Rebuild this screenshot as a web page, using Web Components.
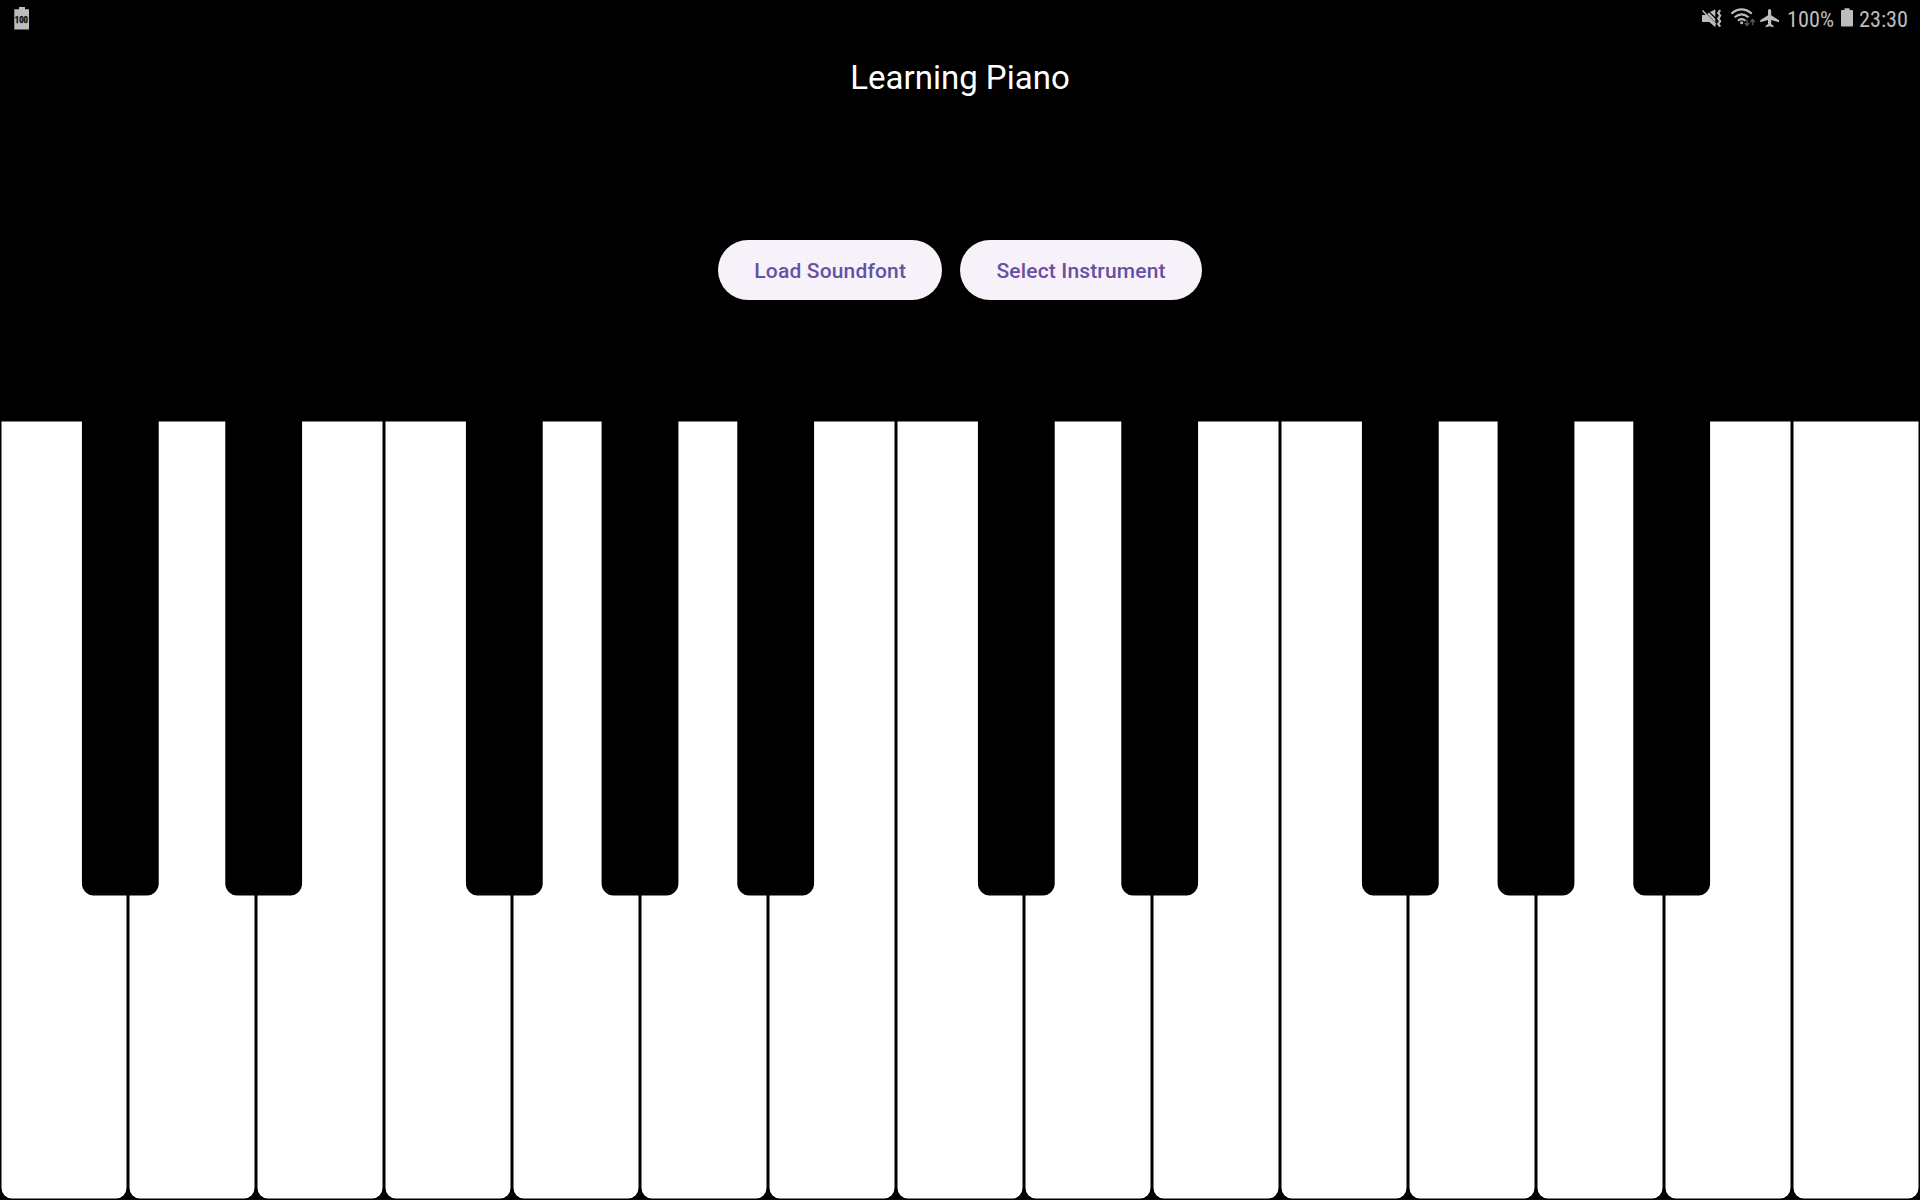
<!DOCTYPE html>
<html lang="en">
<head>
<meta charset="utf-8">
<title>Learning Piano</title>
<style>
html, body { margin: 0; height: 100%; background: #000; overflow: hidden; }
</style>
</head>
<body>
<piano-app></piano-app>
<script>
const define = (name, html, setup) => {
  const t = document.createElement('template');
  t.innerHTML = html;
  customElements.define(name, class extends HTMLElement {
    constructor() {
      super();
      this.attachShadow({ mode: 'open' }).append(t.content.cloneNode(true));
    }
    connectedCallback() { if (setup) setup(this, this.shadowRoot); }
  });
};

define('status-text', `
<style>
:host { display: block; height: 38px; }
svg { display: block; }
text { font-family: "Roboto Condensed", Roboto, sans-serif; font-size: 22.5px; fill: #bdbdbd; }
</style>
<svg height="38"><text y="26.7" lengthAdjust="spacingAndGlyphs"></text></svg>`,
(el, root) => {
  const w = el.getAttribute('width');
  root.querySelector('svg').setAttribute('width', w);
  const text = root.querySelector('text');
  text.setAttribute('textLength', w);
  text.textContent = el.getAttribute('value');
});

define('status-bar', `
<style>
:host { display: flex; justify-content: space-between; height: 38px; padding: 0 12px 0 13px; }
.side { display: flex; }
svg { display: block; fill: #bdbdbd; overflow: visible; }
.label { font: 900 8.4px Roboto, sans-serif; fill: #111; stroke: #111; stroke-width: .3; }
.icons { margin-right: 1px; }
.battery { margin: 0 6px 0 7px; }
</style>
<div class="side">
  <svg width="18" height="38"><path d="M1.3 9.2H6V7h6v2.2h4V29.5H1.3z"/><text class="label" x="1.8" y="22.6" textLength="13.2" lengthAdjust="spacingAndGlyphs">100</text></svg>
</div>
<div class="side">
  <svg class="icons" width="86" height="38">
    <path d="M2 15h4.5l2.4-2.4 6.4 6.4v8.3l-6-5.3H2z M10 12l5.3-2.4v7.4z"/>
    <path d="M3.2 10.8 16.5 24.4" stroke="#000" stroke-width="1.3"/>
    <path d="M2.5 10.5 16 24.5" stroke="#bdbdbd" stroke-width="1.5"/>
    <path d="M20.2 10.2l-2 2.7 2 2.8-2 2.7 2 2.8-2 2.7 2 2.8" fill="none" stroke="#bdbdbd" stroke-width="2.1"/>
    <g fill="none" stroke="#bdbdbd" stroke-width="2.1">
      <path d="M31.4 13.6Q41.6 5.3 51.8 13.6"/><path d="M34.6 17.3Q41.6 11.5 48.6 17.3"/><path d="M37.8 20.7Q41.6 17.6 45.4 20.7"/>
    </g>
    <circle cx="41.6" cy="22.7" r="1.5"/>
    <path d="M47 19.7V25.2M44.7 23 47 25.4l2.3-2.4M52.6 25.2v-5.5M50.3 22l2.3-2.4 2.3 2.4" fill="none" stroke="#555" stroke-width="1.5"/>
    <path d="M68 10.5a1.6 1.6 0 0 1 3.2 0V15.3L79 20.2v2.1l-7.8-2.2v4l2.4 1.8v1.4l-4-1-4 1v-1.4l2.4-1.8v-4l-7.8 2.2v-2.1l7.8-4.9z"/>
  </svg>
  <status-text value="100%" width="47"></status-text>
  <svg class="battery" width="12" height="38"><path d="M1 10h2.5V8.3h5V10H11a1 1 0 0 1 1 1v14.5a1 1 0 0 1-1 1H1a1 1 0 0 1-1-1V11a1 1 0 0 1 1-1z"/></svg>
  <status-text value="23:30" width="49"></status-text>
</div>`);

define('app-title', `
<style>
:host { display: flex; justify-content: center; align-items: center; height: 80px;
  font: 400 33px/40px Roboto, sans-serif; color: #fff; }
</style><slot></slot>`);

define('pill-button', `
<style>
:host { display: block; }
button { box-sizing: border-box; display: block; height: 60px; padding: 2px 36.2px 0; border: 0; border-radius: 30px;
  background: #f7f2fa; color: #6750a4; font: 500 21px/30px Roboto, sans-serif; letter-spacing: .16px; white-space: nowrap;
  -webkit-font-smoothing: antialiased; }
</style><button><slot></slot></button>`);

define('white-key', `
<style>:host { display: block; flex: 0 0 128px; height: 780px; } svg { display: block; }</style>
<svg width="128" height="780"><path d="M1.5 1.5H126.5V768a10.5 10.5 0 0 1-10.5 10.5H12A10.5 10.5 0 0 1 1.5 768z" fill="#fff"/></svg>`);

define('black-key', `
<style>:host { position: absolute; top: 0; width: 77px; height: 476px; } svg { display: block; overflow: visible; }</style>
<svg width="77" height="476"><path d="M0 0H76.8V463.4a12 12 0 0 1-12 12H12a12 12 0 0 1-12-12z"/></svg>`,
(el, root) => {
  const x = 128 * parseFloat(el.getAttribute('at'));
  el.style.left = Math.floor(x) + 'px';
  root.querySelector('path').setAttribute('transform', `translate(${(x % 1).toFixed(2)})`);
});

define('piano-keyboard', `
<style>:host { display: flex; position: relative; height: 780px; }</style>`,
(el, root) => {
  for (let i = 0; i < 15; i++) root.append(document.createElement('white-key'));
  for (const octave of [0, 7]) for (const offset of [.64, 1.76, 3.64, 4.7, 5.76]) {
    const key = document.createElement('black-key');
    key.setAttribute('at', octave + offset);
    root.append(key);
  }
});

define('piano-app', `
<style>
:host { display: flex; flex-direction: column; width: 1920px; height: 1200px; background: #000; }
.controls { flex: 1; display: flex; justify-content: center; align-items: center; gap: 18px; padding-top: 2px; }
</style>
<status-bar></status-bar>
<app-title>Learning Piano</app-title>
<div class="controls"><pill-button>Load Soundfont</pill-button><pill-button>Select Instrument</pill-button></div>
<piano-keyboard></piano-keyboard>`);
</script>
</body>
</html>
